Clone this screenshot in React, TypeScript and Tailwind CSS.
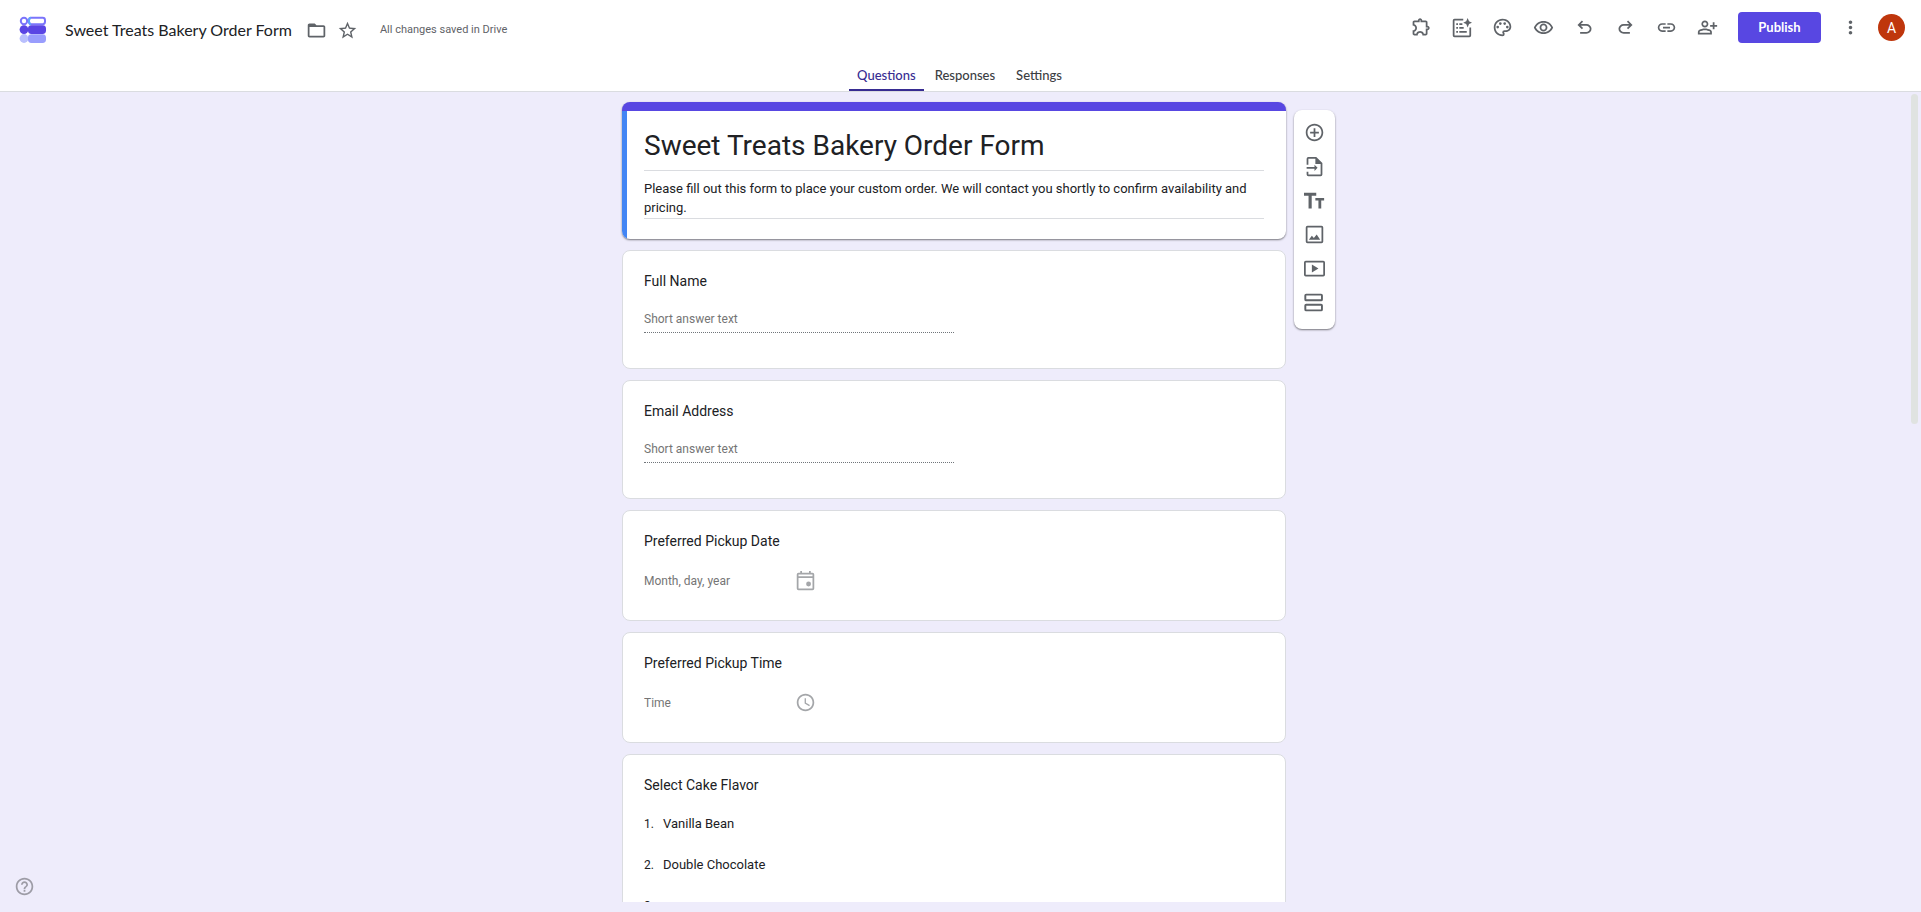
import { useState, type ReactNode } from "react";
import {
  MdAccessTime,
  MdAddCircleOutline,
  MdFolderOpen,
  MdHelpOutline,
  MdLink,
  MdMoreVert,
  MdOutlinePalette,
  MdOutlinePersonAddAlt,
  MdOutlineRemoveRedEye,
  MdStarBorder,
} from "react-icons/md";

function FormsLogo() {
  return (
    <svg className="size-7" viewBox="0 0 28 28" fill="none" aria-hidden="true">
      <circle cx="5" cy="5" r="3.2" stroke="#7b74fb" strokeWidth="2" />
      <rect x="10" y="1.8" width="16" height="6.4" rx="2.4" stroke="#7b74fb" strokeWidth="2" />
      <path d="M12 1.8h-.4Q10 2.2 10 5t1.6 3.2h.4" stroke="#5fa5fb" strokeWidth="2" />
      <circle cx="5" cy="22.5" r="4.4" fill="#b9bffd" />
      <rect x="9" y="18.2" width="18" height="8.8" rx="3.4" fill="#999dfd" />
      <circle cx="5" cy="13.6" r="4.4" fill="#5a45e4" />
      <rect x="9" y="9.2" width="18" height="8.8" rx="3.4" fill="#5a45e4" />
    </svg>
  );
}

function ExtensionIcon() {
  return (
    <svg className="size-[21px]" viewBox="0 -960 960 960" fill="currentColor" aria-hidden="true">
      <path d="M352-120H200q-33 0-56.500-23.500T120-200v-152q48 0 84-30.500t36-77.500q0-47-36-77.500T120-568v-152q0-33 23.500-56.500T200-800h160q0-42 29-71t71-29q42 0 71 29t29 71h160q33 0 56.500 23.500T800-720v160q42 0 71 29t29 71q0 42-29 71t-71 29v160q0 33-23.500 56.500T720-120H568q0-50-31.500-85T460-240q-45 0-76.500 35T352-120Zm-152-80h85q24-66 77-93t98-27q45 0 98 27t77 93h85v-240h80q8 0 14-6t6-14q0-8-6-14t-14-6h-80v-240H480v-80q0-8-6-14t-14-6q-8 0-14 6t-6 14v80H200v88q54 20 87 67t33 105q0 57-33 104t-87 68v88Z" />
    </svg>
  );
}

function FormSparkIcon() {
  return (
    <svg className="size-[21px]" viewBox="0 0 24 24" fill="currentColor" aria-hidden="true">
      <path d="M4 2h10v2H4v17h17v-9h2v9a2 2 0 0 1-2 2H4a2 2 0 0 1-2-2V4a2 2 0 0 1 2-2z" />
      <path d="M19 1l1.600 3.900 3.400 1.600-3.400 1.600L19 12l-1.600-3.900L14 6.500l3.400-1.600z" />
      <path d="M6 7h2v2H6zM6 11.500h2v2H6zM6 16h2v2H6zM9.500 7H13v2H9.500zM9.500 11.500h5v2h-5zM9.500 16H18v2H9.500z" />
    </svg>
  );
}

function UndoIcon() {
  return (
    <svg className="size-[21px]" viewBox="0 -960 960 960" fill="currentColor" aria-hidden="true">
      <path d="M280-200v-80h284q63 0 109.500-40T720-420q0-60-46.500-100T564-560H312l104 104-56 56-200-200 200-200 56 56-104 104h252q97 0 167 63t70 157q0 94-70 157t-167 63H280Z" />
    </svg>
  );
}

function RedoIcon() {
  return (
    <svg className="size-[21px]" viewBox="0 -960 960 960" fill="currentColor" aria-hidden="true">
      <path d="M396-200q-97 0-167-63t-70-157q0-94 70-157t167-63h252L544-744l56-56 200 200-200 200-56-56 104-104H396q-63 0-109.500 40T240-420q0 60 46.500 100T396-280h284v80H396Z" />
    </svg>
  );
}

function ImportIcon() {
  return (
    <svg className="size-[21px]" viewBox="0 0 24 24" fill="currentColor" aria-hidden="true">
      <path d="M14 1H5a2 2 0 0 0-2 2v7h2V3h8v6h6v12H5v-3H3v3a2 2 0 0 0 2 2h14a2 2 0 0 0 2-2V8z" />
      <path d="M12 10l3.500 3.500L12 17v-2.500H3v-2h9z" />
    </svg>
  );
}

function TextIcon() {
  return (
    <svg className="size-[21px]" viewBox="0 0 24 24" fill="currentColor" aria-hidden="true">
      <path d="M0 3v3.500h5.200V21h3.600V6.500H14V3zM13 9v3h3.500v9h3.200v-9H23V9z" />
    </svg>
  );
}

function ImageIcon() {
  return (
    <svg className="size-[21px]" viewBox="0 0 24 24" fill="currentColor" aria-hidden="true">
      <path d="M20 2H4a2 2 0 0 0-2 2v16a2 2 0 0 0 2 2h16a2 2 0 0 0 2-2V4a2 2 0 0 0-2-2zm0 18H4V4h16z" />
      <path d="M5.500 18l3.500-4.500 2.300 2.500 3.200-4 4 6z" />
    </svg>
  );
}

function VideoIcon() {
  return (
    <svg className="size-[21px]" viewBox="0 0 24 24" fill="currentColor" aria-hidden="true">
      <path d="M22 3H2a2 2 0 0 0-2 2v14a2 2 0 0 0 2 2h20a2 2 0 0 0 2-2V5a2 2 0 0 0-2-2zm0 16H2V5h20z" />
      <path d="M9 7.500v9l7.500-4.500z" />
    </svg>
  );
}

function SectionIcon() {
  return (
    <svg className="size-[21px]" viewBox="0 0 24 24" fill="none" stroke="currentColor" strokeWidth="2.200" aria-hidden="true">
      <rect x="1.500" y="3" width="19" height="6.500" rx="1" />
      <rect x="1.500" y="14.500" width="19" height="6.500" rx="1" />
    </svg>
  );
}

function CalendarIcon() {
  return (
    <svg className="size-[21px]" viewBox="0 0 24 24" fill="currentColor" aria-hidden="true">
      <path d="M20 3h-2V1h-2v2H8V1H6v2H4a2 2 0 0 0-2 2v16a2 2 0 0 0 2 2h16a2 2 0 0 0 2-2V5a2 2 0 0 0-2-2zm0 18H4V9h16zm0-14H4V5h16z" />
      <circle cx="15.500" cy="16" r="2.800" />
    </svg>
  );
}

const headerActions = [
  { label: "Add-ons", icon: <ExtensionIcon /> },
  { label: "Help me create", icon: <FormSparkIcon /> },
  { label: "Customize theme", icon: <MdOutlinePalette size={21} /> },
  { label: "Preview", icon: <MdOutlineRemoveRedEye size={21} /> },
  { label: "Undo", icon: <UndoIcon /> },
  { label: "Redo", icon: <RedoIcon /> },
  { label: "Copy responder link", icon: <MdLink size={21} /> },
  { label: "Share", icon: <MdOutlinePersonAddAlt size={21} /> },
];

const toolbarActions = [
  { label: "Add question", icon: <MdAddCircleOutline size={21} /> },
  { label: "Import questions", icon: <ImportIcon /> },
  { label: "Add title and description", icon: <TextIcon /> },
  { label: "Add image", icon: <ImageIcon /> },
  { label: "Add video", icon: <VideoIcon /> },
  { label: "Add section", icon: <SectionIcon /> },
];

const tabs = ["Questions", "Responses", "Settings"];
const flavors = ["Vanilla Bean", "Double Chocolate", ""];

function Card({ children }: { children: ReactNode }) {
  return (
    <section className="shrink-0 rounded-lg border border-[#dadce0] bg-white px-[21px] pt-5">{children}</section>
  );
}

function ShortAnswer({ id, title }: { id: string; title: string }) {
  return (
    <Card>
      <label htmlFor={id} className="block text-sm leading-5">{title}</label>
      <input
        id={id}
        disabled
        placeholder="Short answer text"
        className="mt-4 mb-[35px] block h-[26px] w-1/2 border-b border-dotted border-[#70757a] pb-[2px] text-[12px] placeholder:text-[#757575]"
      />
    </Card>
  );
}

function PickerQuestion({ id, title, hint, icon }: { id: string; title: string; hint: string; icon: ReactNode }) {
  return (
    <Card>
      <label htmlFor={id} className="block text-sm leading-5">{title}</label>
      <div className="mt-[19px] mb-[29px] flex h-[21px] items-center text-[#a4a6a9]">
        <input id={id} disabled placeholder={hint} className="w-[151px] text-[12px] placeholder:text-[#757575]" />
        {icon}
      </div>
    </Card>
  );
}

export default function App() {
  const [activeTab, setActiveTab] = useState("Questions");
  const [formName, setFormName] = useState("Sweet Treats Bakery Order Form");
  const [description, setDescription] = useState(
    "Please fill out this form to place your custom order. We will contact you shortly to confirm availability and pricing."
  );

  return (
    <div className="flex h-screen flex-col bg-[#eeecfb] font-[Roboto,sans-serif] text-[#202124]">
      <header className="flex h-[92px] shrink-0 flex-col justify-between border-b border-[#dadce0] bg-white">
        <div className="flex h-[60px] items-center justify-between pr-4 pl-[19px]">
          <div className="flex items-center">
            <a href="#" aria-label="Forms home">
              <FormsLogo />
            </a>
            <h2 className="ml-[18px] font-[Lato,sans-serif] text-base leading-6">{formName}</h2>
            <div className="ml-[14px] flex items-center gap-[10px] text-[#5f6368]">
              <button aria-label="Move to folder"><MdFolderOpen size={21} /></button>
              <button aria-label="Star"><MdStarBorder size={21} /></button>
            </div>
            <span className="ml-[22px] text-[11px] text-[#5f6368]">All changes saved in Drive</span>
          </div>
          <div className="flex items-center pb-[5px] text-[#5f6368]">
            <div className="flex gap-5">
              {headerActions.map((action) => (
                <button key={action.label} aria-label={action.label}>{action.icon}</button>
              ))}
            </div>
            <button className="ml-5 h-[31px] w-[83px] rounded bg-[#5847e2] font-[Lato,sans-serif] text-[13px] font-bold text-white">
              Publish
            </button>
            <button aria-label="More" className="ml-[19px]"><MdMoreVert size={21} /></button>
            <button aria-label="Account" className="ml-[17px] size-[27px] rounded-full bg-[#bf360c] text-sm text-white">
              A
            </button>
          </div>
        </div>
        <nav className="flex justify-center gap-px">
          {tabs.map((tab) => (
            <button
              key={tab}
              onClick={() => setActiveTab(tab)}
              className={
                tab === activeTab
                  ? "h-[31px] border-b-2 border-[#372c92] px-2 pt-[2px] font-[Lato,sans-serif] text-[13px] font-medium text-[#372c92]"
                  : "h-[31px] border-b-2 border-transparent px-[10px] pt-[2px] font-[Lato,sans-serif] text-[13px] font-medium text-[#3c4043]"
              }
            >
              {tab}
            </button>
          ))}
        </nav>
      </header>

      <div className="flex min-h-0 grow pr-[3px] pb-[10px]">
        <main className="grid grow grid-cols-[1fr_minmax(0,664px)_1fr] grid-rows-[minmax(0,1fr)] overflow-hidden pt-[10px]">
          <div className="flex self-end pb-[5px] pl-[14px] text-[#9d9ca6]">
            <button aria-label="Help"><MdHelpOutline size={21} /></button>
          </div>
          <div className="flex flex-col gap-[11px]">
            <section className="shrink-0 overflow-hidden rounded-lg border-t-[9px] border-[#5847e2] bg-white shadow-[0_1px_2px_rgba(0,0,0,0.5)]">
              <div className="border-l-[5px] border-[#4285f4] pt-3 pr-[22px] pb-5 pl-[17px]">
                <input
                  aria-label="Form title"
                  value={formName}
                  onChange={(e) => setFormName(e.target.value)}
                  className="block h-12 w-full border-b border-[#dadce0] pb-[3px] text-[28px]"
                />
                <textarea
                  aria-label="Form description"
                  rows={2}
                  value={description}
                  onChange={(e) => setDescription(e.target.value)}
                  className="mt-2 block w-full resize-none overflow-hidden border-b border-[#dadce0] pb-px text-[13px] leading-[19px]"
                />
              </div>
            </section>
            <ShortAnswer id="full-name" title="Full Name" />
            <ShortAnswer id="email" title="Email Address" />
            <PickerQuestion id="pickup-date" title="Preferred Pickup Date" hint="Month, day, year" icon={<CalendarIcon />} />
            <PickerQuestion id="pickup-time" title="Preferred Pickup Time" hint="Time" icon={<MdAccessTime size={21} />} />
            <Card>
              <h3 className="text-sm leading-5">Select Cake Flavor</h3>
              <ol className="mt-[19px] text-[13px] leading-5">
                {flavors.map((flavor, i) => (
                  <li key={i} className="flex h-[41px]">
                    <span className="w-[19px] text-[12px]">{i + 1}.</span>
                    <span>{flavor}</span>
                  </li>
                ))}
              </ol>
            </Card>
          </div>
          <div className="mt-2 ml-2 flex w-[41px] flex-col items-center gap-[13px] self-start rounded-lg bg-white pt-3 pb-4 text-[#5f6368] shadow-[0_1px_2px_rgba(0,0,0,0.5)]">
            {toolbarActions.map((action) => (
              <button key={action.label} aria-label={action.label}>{action.icon}</button>
            ))}
          </div>
        </main>
        <div className="mt-[2px] ml-[3px] h-[330px] w-[7px] rounded-full bg-[#e0e3e1]" />
      </div>
    </div>
  );
}
